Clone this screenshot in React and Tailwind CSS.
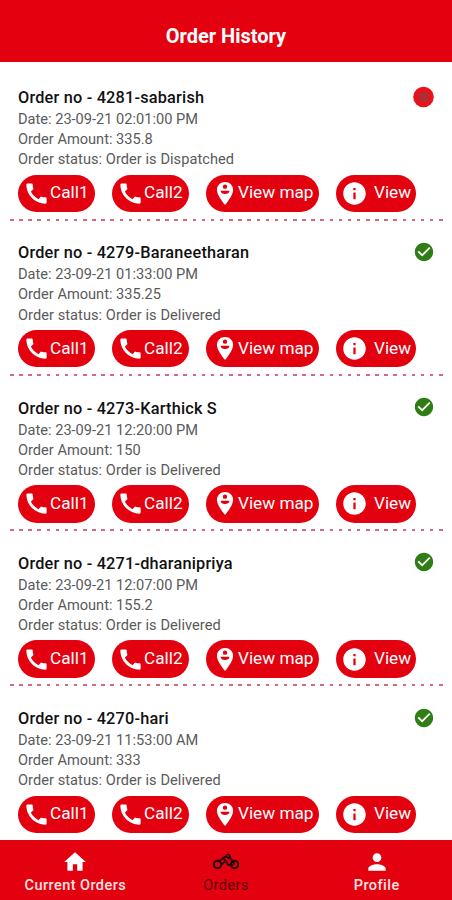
import React from 'react';
import {
  MdCall,
  MdInfo,
  MdHome,
  MdPerson,
  MdCheckCircle,
} from "react-icons/md";

const orders = [
  { no: '4281-sabarish', date: '23-09-21 02:01:00 PM', amount: '335.8', status: 'Dispatched' },
  { no: '4279-Baraneetharan', date: '23-09-21 01:33:00 PM', amount: '335.25', status: 'Delivered' },
  { no: '4273-Karthick S', date: '23-09-21 12:20:00 PM', amount: '150', status: 'Delivered' },
  { no: '4271-dharanipriya', date: '23-09-21 12:07:00 PM', amount: '155.2', status: 'Delivered' },
  { no: '4270-hari', date: '23-09-21 11:53:00 AM', amount: '333', status: 'Delivered' },
];

function PersonPin({ className }) {
  return (
    <svg viewBox="0 0 26 26" className={className}>
      <path d="M13.5 2C9.1 2 5.7 5.3 5.7 9.6 5.7 15 13.500 24 13.500 24s7.800-9 7.800-14.400C21.300 5.300 17.900 2 13.500 2z" fill="currentColor" />
      <circle cx="13.500" cy="6.400" r="2.100" fill="#e3000f" />
      <path d="M9.200 10.300h8.600c-.2 2-2 3.200-4.300 3.200s-4.100-1.200-4.300-3.200z" fill="#e3000f" />
    </svg>
  );
}

function Bike({ className }) {
  return (
    <svg viewBox="0 0 26 26" className={className} fill="none" stroke="currentColor">
      <circle cx="4.500" cy="15.500" r="3.700" strokeWidth="2" />
      <circle cx="21.500" cy="15.500" r="3.700" strokeWidth="2" />
      <path d="M13.500 5.500h2.500l2 4.500 3.500 5.500M5.500 12l5-2.500 3 3 1.500 3.500h5M8.500 15.500l3.500-3" strokeWidth="1.700" />
      <path d="M9.500 9.500l3.500-2 4.500 2.500" strokeWidth="2" />
    </svg>
  );
}

function PillButton({ icon: Icon, label, className }) {
  return (
    <button className={`flex h-[37.5px] shrink-0 items-center rounded-full bg-[#e3000f] text-[17.2px] text-white ${className}`}>
      <Icon className="size-[27px] shrink-0" />
      <span className="whitespace-nowrap">{label}</span>
    </button>
  );
}

function StatusIcon({ status }) {
  if (status === 'Delivered') {
    return <MdCheckCircle className="mt-[10.5px] size-[22px] text-[#2f7d14]" />;
  }
  return (
    <svg viewBox="0 0 22 22" className="mt-[10.5px] size-[22px]">
      <circle cx="10.5" cy="11" r="10.3" fill="#e8121c" />
      <g fill="none" stroke="#963a40" strokeWidth="1.5">
        <circle cx="10.5" cy="11" r="4.2" />
        <path d="M6.500 9.500h8M7.500 12.500h6M8.500 8l4 6" />
      </g>
    </svg>
  );
}

function OrderCard({ order }) {
  return (
    <div className="h-[155.25px] shrink-0">
      <div className="flex h-[99.5px] items-start justify-between pr-[17px] pl-[18px]">
        <div className="pt-[12px] text-[14.6px] leading-[20.2px] text-[#5a5a5a]">
          <div className="text-[16.3px] leading-[22px] font-medium tracking-[0.2px] text-[#111]">Order no - {order.no}</div>
          <div>Date: {order.date}</div>
          <div>Order Amount: {order.amount}</div>
          <div className="tracking-[0.05px]">Order status: Order is {order.status}</div>
        </div>
        <StatusIcon status={order.status} />
      </div>
      <div className="flex pl-[18px]">
        <PillButton icon={MdCall} label="Call1" className="w-[77px] pl-[5px]" />
        <PillButton icon={MdCall} label="Call2" className="ml-[17px] w-[77px] pl-[5px]" />
        <PillButton icon={PersonPin} label="View map" className="ml-[17px] w-[113px] pl-[5px]" />
        <PillButton icon={MdInfo} label="View" className="ml-[17px] w-[80px] gap-[6px] pl-[5px]" />
      </div>
      <div className="mx-[9.5px] mt-[6.5px] h-[2px] bg-[repeating-linear-gradient(90deg,#d9667f_0_3.5px,transparent_3.5px_9.13px)]" />
    </div>
  );
}

function Tab({ icon: Icon, label, className, labelClass }) {
  return (
    <div className={`flex flex-1 flex-col items-center pt-[9px] ${className}`}>
      <Icon className="size-[26px]" />
      <span className={`pt-px text-[14.5px] leading-[20px] tracking-[0.45px] ${labelClass}`}>{label}</span>
    </div>
  );
}

export default function App() {
  return (
    <div className="flex h-[900px] w-[452px] flex-col overflow-hidden bg-white font-[Roboto,sans-serif]">
      <header className="flex h-[62px] shrink-0 items-center justify-center bg-[#e3000f] pt-[10px] text-[20px] font-bold text-white">
        Order History
      </header>
      <main className="mb-px flex min-h-0 flex-1 flex-col overflow-hidden pt-[13px]">
        {orders.map((order) => (
          <OrderCard key={order.no} order={order} />
        ))}
      </main>
      <nav className="flex h-[60px] shrink-0 bg-[#e3000f]">
        <Tab icon={MdHome} label="Current Orders" className="text-white" labelClass="font-medium text-[#ffe4e4]" />
        <Tab icon={Bike} label="Orders" className="text-[#1c0004]" labelClass="text-[#5c0008]" />
        <Tab icon={MdPerson} label="Profile" className="text-white" labelClass="font-medium text-[#ffe4e4]" />
      </nav>
    </div>
  );
}
